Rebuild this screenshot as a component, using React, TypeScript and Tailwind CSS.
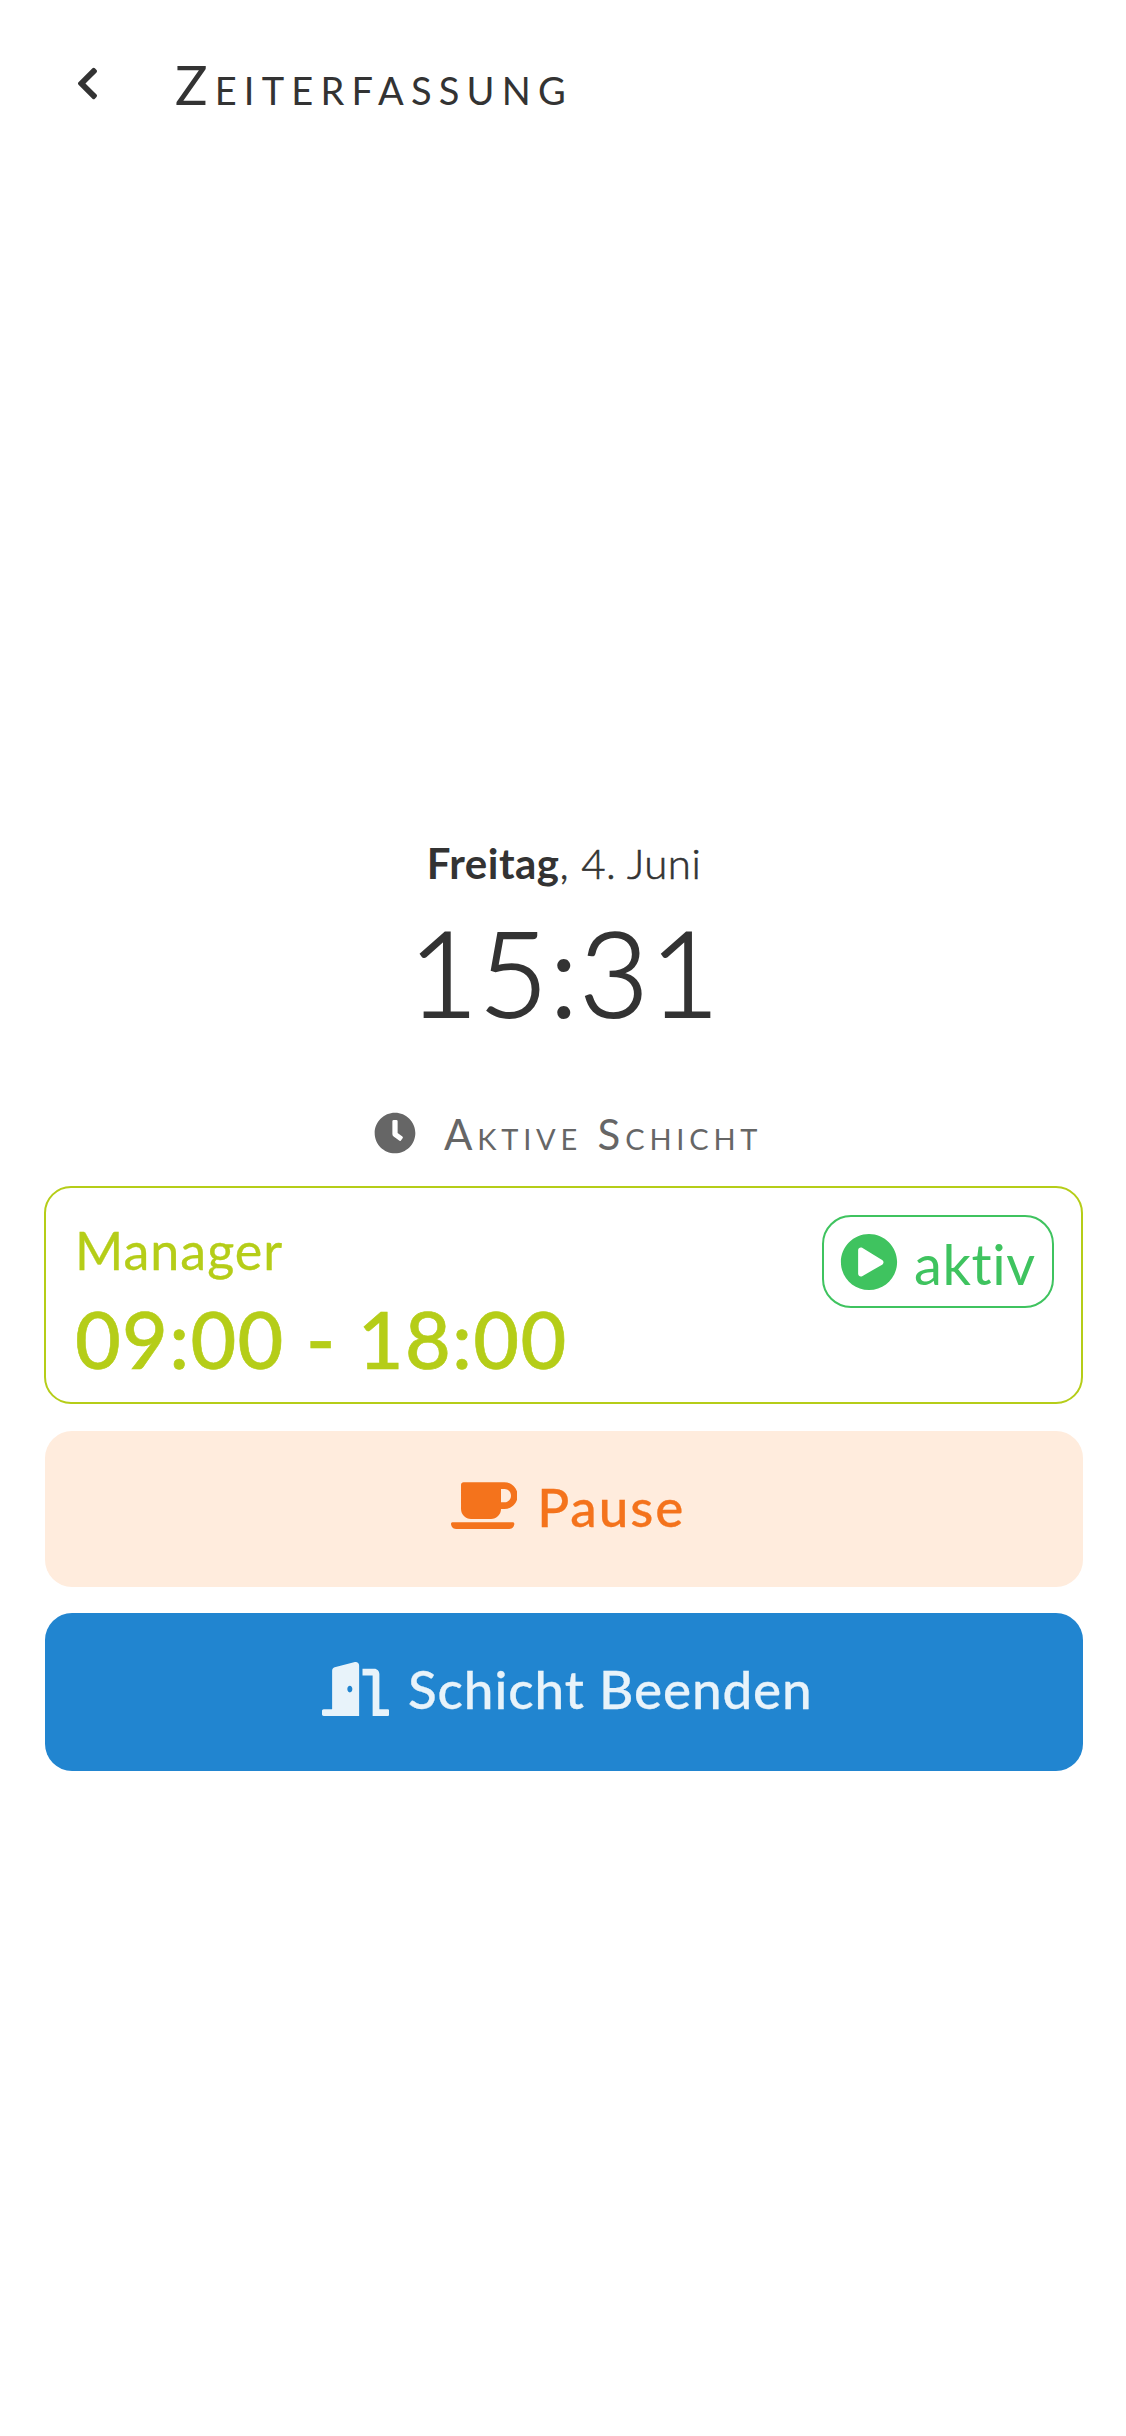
import { FaChevronLeft, FaClock, FaCoffee, FaDoorOpen, FaPlayCircle } from "react-icons/fa";

export default function App() {
  return (
    <main className="flex h-[2436px] w-[1126px] flex-col bg-white font-['Lato',sans-serif] text-[#333333] [font-variant-ligatures:none]">
      <header className="flex h-[168px] items-start pl-[76px]">
        <button className="mt-[65px]" aria-label="Zurück">
          <FaChevronLeft className="h-[37px] w-[23px]" />
        </button>
        <h1 className="mt-[52px] ml-[76px] text-[54px] leading-[66px] tracking-[7.2px] whitespace-nowrap [font-variant-caps:small-caps]">
          Zeiterfassung
        </h1>
      </header>

      <section className="mt-[669px] flex flex-col items-center">
        <p className="h-[52px] pl-[2px] text-[42px] leading-[52px] font-light tracking-[0.5px] whitespace-nowrap [-webkit-text-stroke:0.6px]">
          <strong className="font-bold [-webkit-text-stroke:0px]">Freitag</strong>, 4. Juni
        </p>
        <p className="mt-[10px] h-[144px] pl-[3px] text-[119px] leading-[144px] font-light tracking-[1.4px] whitespace-nowrap [-webkit-text-stroke:2px]">
          15:31
        </p>
      </section>

      <h2 className="mt-[65px] flex h-[54px] items-start pl-[374px] text-[#666666]">
        <FaClock className="mt-[4px] h-[42px] w-[42px]" />
        <span className="-mt-px ml-[28px] text-[42px] leading-[54px] tracking-[4.8px] whitespace-nowrap [font-variant-caps:small-caps]">
          Aktive Schicht
        </span>
      </h2>

      <article className="mr-[43px] ml-[44px] mt-[24px] flex h-[218px] items-start justify-between rounded-[27px] border-2 border-[#b5cd18] pl-[29px] pr-[27px] text-[#b5cd18]">
        <div>
          <p className="mt-[30px] h-[64px] text-[52px] leading-[64px] tracking-[1px] whitespace-nowrap [-webkit-text-stroke:0.3px]">
            Manager
          </p>
          <p className="mt-[9px] h-[96px] text-[79px] leading-[96px] font-medium tracking-[1.3px] whitespace-nowrap [-webkit-text-stroke:0.6px]">
            09:00 - 18:00
          </p>
        </div>
        <span className="mt-[27px] flex h-[93px] w-[232px] items-start rounded-[29px] border-2 border-[#3fc35f] pl-[16px] text-[#3fc35f]">
          <FaPlayCircle className="mt-[16px] h-[58px] w-[58px]" />
          <span className="ml-[16px] mt-[13px] text-[56px] leading-[68px] tracking-[0.6px] whitespace-nowrap">aktiv</span>
        </span>
      </article>

      <button className="mr-[43px] ml-[44.5px] mt-[27px] flex h-[156px] items-start rounded-[27px] bg-[#ffecdd] pl-[406px] text-[#f4731c]">
        <FaCoffee className="mt-[48px] h-[53.3px] w-[66.7px]" />
        <span className="ml-[20px] mt-[43px] text-[53px] leading-[66px] font-medium tracking-[1.9px] whitespace-nowrap [-webkit-text-stroke:0.3px]">
          Pause
        </span>
      </button>
      <button className="mr-[43px] ml-[44.5px] mt-[26px] flex h-[158px] items-start rounded-[27px] bg-[#2185d0] pl-[277px] text-[#e8f3fa]">
        <FaDoorOpen className="mt-[49px] h-[54px] w-[67.5px]" />
        <span className="ml-[19px] mt-[43px] text-[53px] leading-[66px] font-medium tracking-[0.9px] whitespace-nowrap [-webkit-text-stroke:0.3px]">
          Schicht Beenden
        </span>
      </button>
    </main>
  );
}
